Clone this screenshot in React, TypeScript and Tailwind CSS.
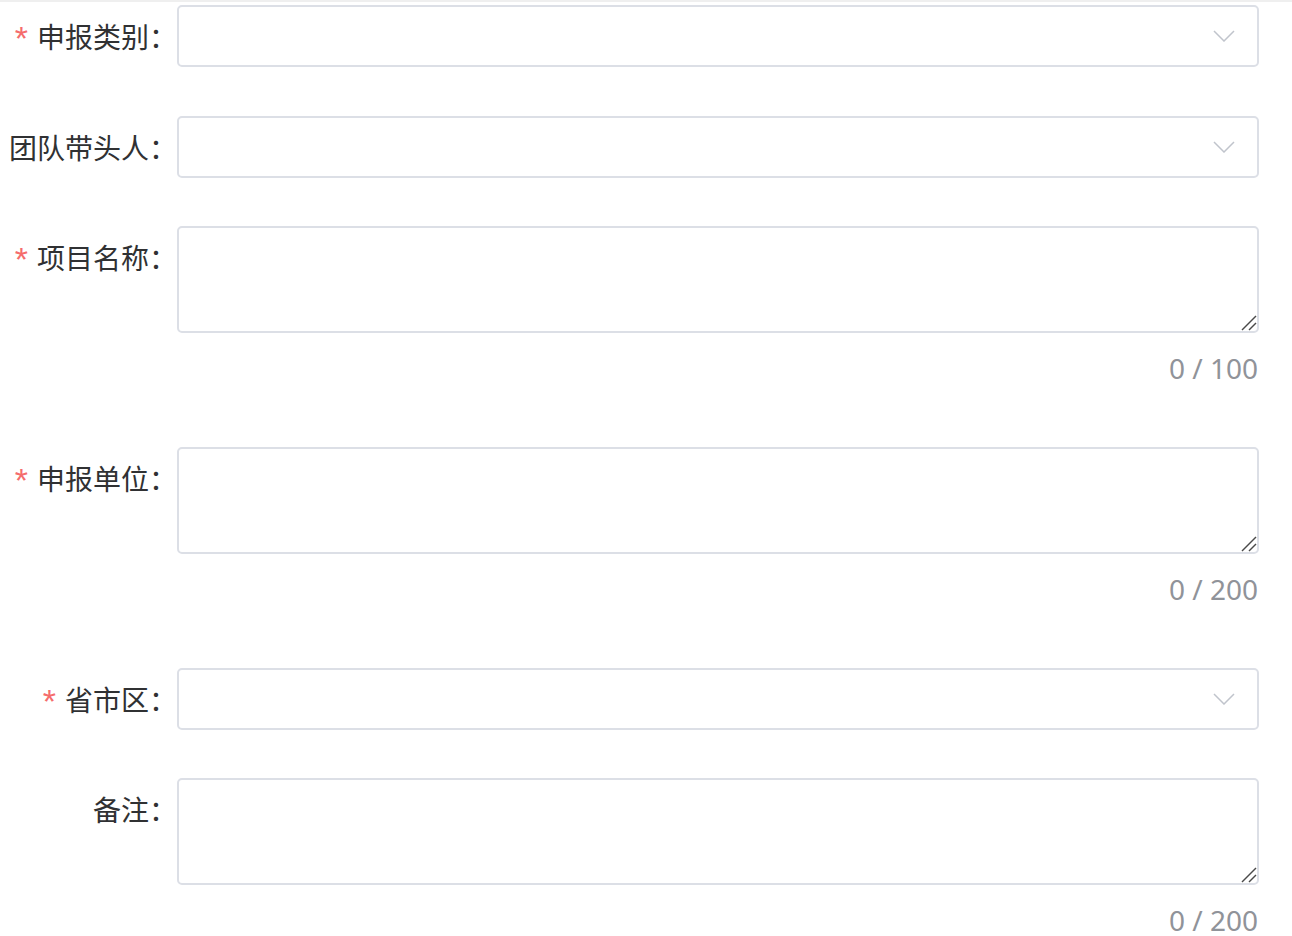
import type { ReactNode } from "react";

const FONT = { fontFamily: '"Noto Sans CJK SC", "Noto Sans", sans-serif' };

function Label({ text, required }: { text: string; required?: boolean }) {
  return (
    <div className="w-[177px] shrink-0 h-[62px] flex items-center justify-end whitespace-nowrap text-[28px] text-[#303133]">
      {required && (
        <span className="text-[#f56c6c] mr-[9px] text-[34px] leading-none translate-y-[2px]" style={{ fontFamily: '"Liberation Sans", Arial, sans-serif' }}>
          *
        </span>
      )}
      <span>{text}：</span>
    </div>
  );
}

function Chevron() {
  return (
    <svg width="22" height="12" viewBox="0 0 22 12" fill="none" className="absolute right-[22px] top-1/2 -translate-y-1/2">
      <polyline points="1,1 11,11 21,1" stroke="#c0c4cc" strokeWidth="1.5" />
    </svg>
  );
}

// macOS-style textarea resize grip
function Grip() {
  return (
    <svg width="16" height="16" viewBox="0 0 16 16" fill="none" className="absolute right-[2px] bottom-[2px] pointer-events-none">
      <line x1="15" y1="1" x2="1" y2="15" stroke="#4a4a4a" strokeWidth="1.4" />
      <line x1="15" y1="8" x2="8" y2="15" stroke="#4a4a4a" strokeWidth="1.4" />
    </svg>
  );
}

function Row({ children, className }: { children: ReactNode; className?: string }) {
  return <div className={`flex items-start pr-[33px] ${className ?? ""}`}>{children}</div>;
}

function SelectRow({ label, required, className }: { label: string; required?: boolean; className?: string }) {
  return (
    <Row className={className}>
      <Label text={label} required={required} />
      <div className="relative flex-1 h-[62px] border-2 border-[#dcdfe6] rounded-[5px] bg-white">
        <Chevron />
      </div>
    </Row>
  );
}

function AreaRow({ label, required, max, className }: { label: string; required?: boolean; max: number; className?: string }) {
  return (
    <div className={className}>
      <Row>
        <Label text={label} required={required} />
        <div className="relative flex-1">
          <textarea className="w-full h-[107px] border-2 border-[#dcdfe6] rounded-[5px] bg-white resize-none outline-none block" />
          <Grip />
        </div>
      </Row>
      <div className="pr-[34px] h-[70px] flex items-center justify-end text-[28px] text-[#909399]" style={{ fontFamily: '"Noto Sans", "Liberation Sans", sans-serif' }}>
        0 / {max}
      </div>
    </div>
  );
}

export default function App() {
  return (
    <div className="w-[1292px] h-[936px] bg-white overflow-hidden" style={FONT}>
      <div className="h-[2px] bg-[#efefef]" />
      <div className="pt-[3px]">
        <SelectRow label="申报类别" required className="mb-[49px]" />
        <SelectRow label="团队带头人" required className="mb-[48px]" />
        <AreaRow label="项目名称" required max={100} className="mb-[44px]" />
        <AreaRow label="申报单位" required max={200} className="mb-[44px]" />
        <SelectRow label="省市区" required className="mb-[48px]" />
        <AreaRow label="备注" max={200} />
      </div>
    </div>
  );
}
